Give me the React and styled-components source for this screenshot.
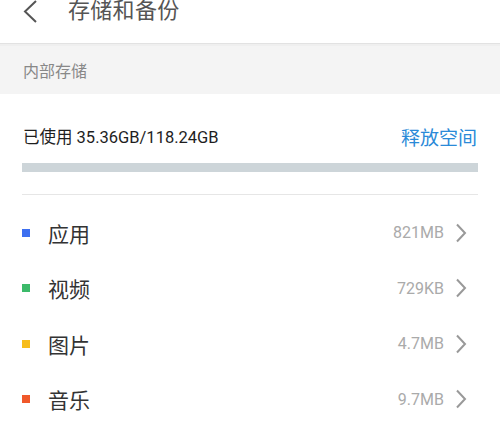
import React from "react";
import styled, { createGlobalStyle } from "styled-components";

const GlobalStyle = createGlobalStyle`
  body {
    margin: 0;
    background: #ffffff;
    font-family: Roboto, "Noto Sans CJK SC", sans-serif;
    overflow: hidden;
  }
`;

const items = [
  { name: "应用", size: "821MB", color: "#3d6ff0" },
  { name: "视频", size: "729KB", color: "#3cba6a" },
  { name: "图片", size: "4.7MB", color: "#f7bd1b" },
  { name: "音乐", size: "9.7MB", color: "#f0582a" },
  { name: "其他", size: "1.2GB", color: "#9b59d0" },
];

function App() {
  return (
    <>
      <GlobalStyle />
      <Page>
        <Header>
          <BackIcon width="18" height="24" viewBox="0 0 18 24">
            <path d="M15 1 L4 11.5 L15 22" fill="none" stroke="#555" strokeWidth="2" />
          </BackIcon>
          <Title>存储和备份</Title>
        </Header>

        <SectionHead>内部存储</SectionHead>

        <UsageBlock>
          <UsageRow>
            <UsedText>已使用 35.36GB/118.24GB</UsedText>
            <FreeLink>释放空间</FreeLink>
          </UsageRow>
          <Bar />
        </UsageBlock>

        <List>
          {items.map((it) => (
            <Row key={it.name}>
              <Dot color={it.color} />
              <Label>{it.name}</Label>
              <Size>{it.size}</Size>
              <Chevron width="12" height="20" viewBox="0 0 12 20">
                <path d="M2 1.5 L10 10 L2 18.5" fill="none" stroke="#999" strokeWidth="2" />
              </Chevron>
            </Row>
          ))}
        </List>
      </Page>
    </>
  );
}

const Page = styled.div`
  width: 500px;
  height: 442px;
  overflow: hidden;
  background: #fff;
`;

const Header = styled.div`
  display: flex;
  align-items: flex-start;
  padding-left: 21px;
  border-bottom: 1px solid #e2e2e2;
  box-sizing: border-box;
  margin-top: -9px;
  height: 53px;
  padding-top: 9px;
`;

const BackIcon = styled.svg`
  display: block;
`;

const Title = styled.div`
  margin-left: 29px;
  margin-top: -4px;
  font-size: 22px;
  line-height: 30px;
  color: #555;
  letter-spacing: 0.3px;
`;

const SectionHead = styled.div`
  height: 50px;
  background: #f4f4f4;
  border-top: 2px solid #efefef;
  box-sizing: border-box;
  padding-left: 23px;
  display: flex;
  align-items: center;
  font-size: 16px;
  color: #888;
`;

const UsageBlock = styled.div`
  margin: 0 22px;
  padding-top: 29px;
  padding-bottom: 22px;
  border-bottom: 1px solid #e6e6e6;
`;

const UsageRow = styled.div`
  display: flex;
  align-items: center;
  justify-content: space-between;
  height: 26px;
`;

const UsedText = styled.div`
  font-size: 16.5px;
  color: #1e1e1e;
  padding-left: 1px;
`;

const FreeLink = styled.div`
  font-size: 19px;
  color: #2a8ad8;
  margin-right: 1px;
`;

const Bar = styled.div`
  margin-top: 14px;
  height: 9px;
  background: #cdd5d9;
`;

const List = styled.div`
  padding: 10px 0 0 22px;
`;

const Row = styled.div`
  height: 55.5px;
  display: flex;
  align-items: center;
  padding-right: 33px;
`;

const Dot = styled.span`
  width: 8px;
  height: 8px;
  background: ${(p) => p.color};
  flex-shrink: 0;
`;

const Label = styled.div`
  margin-left: 18px;
  font-size: 21px;
  color: #333;
  flex: 1;
`;

const Size = styled.div`
  font-size: 16px;
  color: #aaa;
  margin-right: 11px;
`;

const Chevron = styled.svg`
  display: block;
`;

export default App;
